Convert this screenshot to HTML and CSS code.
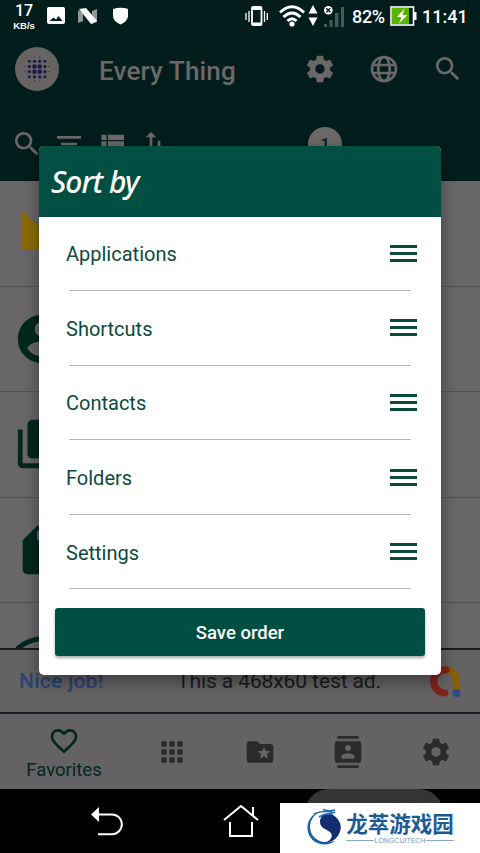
FILE: index.html
```html
<!DOCTYPE html>
<html lang="en">
<head>
<meta charset="utf-8">
<title>Every Thing</title>
<link rel="stylesheet" href="styles.css">
</head>
<body>
<svg class="defs" width="0" height="0">
  <symbol id="gear" viewBox="0 0 24 24"><path d="M19.43 12.98c.04-.32.07-.64.07-.98s-.03-.66-.07-.98l2.11-1.65c.19-.15.24-.42.12-.64l-2-3.46c-.12-.22-.39-.3-.61-.22l-2.49 1c-.52-.4-1.08-.73-1.69-.98l-.38-2.65C14.46 2.18 14.25 2 14 2h-4c-.25 0-.46.18-.49.42l-.38 2.65c-.61.25-1.17.59-1.69.98l-2.49-1c-.23-.09-.49 0-.61.22l-2 3.46c-.13.22-.07.49.12.64l2.11 1.65c-.04.32-.07.65-.07.98s.03.66.07.98l-2.11 1.65c-.19.15-.24.42-.12.64l2 3.46c.12.22.39.3.61.22l2.49-1c.52.4 1.08.73 1.69.98l.38 2.65c.03.24.24.42.49.42h4c.25 0 .46-.18.49-.42l.38-2.65c.61-.25 1.17-.59 1.69-.98l2.49 1c.23.09.49 0 .61-.22l2-3.46c.12-.22.07-.49-.12-.64l-2.11-1.65zM12 15.5c-1.93 0-3.5-1.57-3.5-3.5s1.57-3.5 3.5-3.5 3.5 1.57 3.5 3.5-1.57 3.5-3.5 3.5z"/></symbol>
  <symbol id="search" viewBox="0 0 24 24"><path d="M15.5 14h-.79l-.28-.27C15.41 12.59 16 11.11 16 9.5 16 5.91 13.09 3 9.5 3S3 5.91 3 9.5 5.91 16 9.5 16c1.61 0 3.09-.59 4.23-1.57l.27.28v.79l5 4.99L20.49 19l-4.99-5zm-6 0C7.01 14 5 11.99 5 9.5S7.01 5 9.5 5 14 7.01 14 9.5 11.99 14 9.5 14z"/></symbol>
</svg>
<div class="screen">
  <header class="top">
    <div class="status">
      <div class="speed"><b>17</b><span>KB/s</span></div>
      <svg class="s-pic" width="18" height="18" viewBox="0 0 18 18"><path fill="#fff" fill-rule="evenodd" d="M2 0h14q2 0 2 2v13q0 2-2 2H2q-2 0-2-2V2q0-2 2-2zM2.500 14h13l-4-5-2.500 3.500-2.500-2z"/></svg>
      <svg class="s-n" width="20" height="18" viewBox="0 0 20 18"><path fill="#8d9a98" d="M0 2l5 3v8l-5 2zM14 3l5-2v13l-5 2z"/><path fill="#fff" d="M1 1l7-1 11 13-6 3z"/></svg>
      <svg class="s-shield" width="16" height="18" viewBox="0 0 16 18"><path fill="#fff" d="M0 2Q8-.5 15 2v7q0 5-7.500 8.500Q0 14 0 9z"/></svg>
      <svg class="s-vib" width="24" height="22" viewBox="0 0 24 22" fill="none" stroke="#fff"><path stroke-width="1.300" d="M1 8v7M4 6v11M19.500 6v11M22.300 8v7"/><rect x="7" y="2" width="9.500" height="18" rx="1" stroke-width="1.800"/><path stroke-width="2" d="M7 4h9M8 18.500h8"/></svg>
      <svg class="s-wifi" width="26" height="22" viewBox="0 0 26 22" fill="none" stroke="#fff" stroke-width="2.800"><path d="M1 7.500Q13-4 25 7.500M4.500 12Q13 4 21.500 12M8.500 16Q13 11.500 17.500 16"/><circle cx="13" cy="19" r="2.600" fill="#fff" stroke="none"/></svg>
      <svg class="s-data" width="10" height="22" viewBox="0 0 10 22"><path fill="#fff" d="M5 0l4.500 8.500h-9zM5 21L.5 12.500h9z"/></svg>
      <svg class="s-sig" width="22" height="22" viewBox="0 0 22 22"><path fill="#43595a" d="M1 18h3v3H1zM6.500 14h3v7h-3zM12 7h3.500v14H12zM18 1h3v20h-3z"/><circle cx="5.300" cy="4.300" r="4.300" fill="#fff"/><path stroke="#021d1c" stroke-width="1.500" d="M3.300 2.300l4 4M7.300 2.300l-4 4"/></svg>
      <span class="pct">82%</span>
      <svg class="s-bat" width="27" height="20" viewBox="0 0 27 20"><rect x="1" y="1" width="22.500" height="18" fill="#021d1c" stroke="#fff" stroke-width="1.600"/><path fill="#58b400" d="M2 2h17v16H2z"/><path fill="#fff" d="M24 6h2.500v8H24zM14.500 2.500L7 11h4.500L9 17.500 17.500 9h-5z"/></svg>
      <span class="clock">11:41</span>
    </div>
    <div class="appbar">
      <svg class="logo" width="44" height="44" viewBox="0 0 44 44"><circle cx="22" cy="22" r="22" fill="#676463"/><g fill="#1d1849"><circle cx="19.500" cy="19.500" r="2.300"/><circle cx="24.700" cy="19.500" r="2.300"/><circle cx="19.500" cy="24.700" r="2.300"/><circle cx="24.700" cy="24.700" r="2.300"/><circle cx="14.300" cy="14.300" r="1.400"/><circle cx="19.500" cy="14.300" r="1.600"/><circle cx="24.700" cy="14.300" r="1.600"/><circle cx="29.900" cy="14.300" r="1.400"/><circle cx="14.300" cy="19.500" r="1.600"/><circle cx="29.900" cy="19.500" r="1.600"/><circle cx="14.300" cy="24.700" r="1.600"/><circle cx="29.900" cy="24.700" r="1.600"/><circle cx="14.300" cy="29.900" r="1.400"/><circle cx="19.500" cy="29.900" r="1.600"/><circle cx="24.700" cy="29.900" r="1.600"/><circle cx="29.900" cy="29.900" r="1.400"/><circle cx="19.500" cy="10" r=".6"/><circle cx="24.700" cy="10" r=".6"/><circle cx="10" cy="19.500" r=".6"/><circle cx="10" cy="24.700" r=".6"/><circle cx="34" cy="19.500" r=".6"/><circle cx="34" cy="24.700" r=".6"/><circle cx="19.500" cy="34" r=".6"/><circle cx="24.700" cy="34" r=".6"/></g></svg>
      <h1>Every Thing</h1>
      <nav class="actions">
        <svg width="32" height="32"><use href="#gear"/></svg>
        <svg width="32" height="32" viewBox="0 0 24 24" fill="none" stroke="#6b6867" stroke-width="2"><circle cx="12" cy="12" r="9"/><ellipse cx="12" cy="12" rx="4.300" ry="9"/><path d="M3.500 9h17M3.500 15h17"/></svg>
        <svg width="32" height="32"><use href="#search"/></svg>
      </nav>
    </div>
    <div class="tools">
      <svg class="t-search" width="32" height="32"><use href="#search"/></svg>
      <svg class="t-sort" width="32" height="32" viewBox="0 0 24 24"><path d="M10 18h4v-2h-4v2zM3 6v2h18V6H3zm3 7h12v-2H6v2z"/></svg>
      <svg class="t-list" width="32" height="32" viewBox="0 0 24 24"><path d="M4 14h4v-4H4v4zm0 5h4v-4H4v4zM4 9h4V5H4v4zm5 5h12v-4H9v4zm0 5h12v-4H9v4zM9 5v4h12V5H9z"/></svg>
      <svg class="t-swap" width="32" height="32" viewBox="0 0 24 24"><path d="M16 17.010V9.500h-2v7.510h-3L15 21l4-3.990h-3zM9 3L5 6.990h3V14h2V6.990h3L9 3z"/></svg>
      <span class="count">1</span>
    </div>
  </header>
  <main class="list">
    <div class="row"><svg width="58" height="58" viewBox="0 0 58 58"><path fill="#8a6c06" d="M9 7l19 17v21H9z"/></svg></div>
    <div class="row"><svg width="58" height="58" viewBox="0 0 24 24"><path d="M12 2C6.480 2 2 6.480 2 12s4.480 10 10 10 10-4.480 10-10S17.520 2 12 2zm0 3c1.660 0 3 1.340 3 3s-1.340 3-3 3-3-1.340-3-3 1.340-3 3-3zm0 14.200c-2.500 0-4.710-1.280-6-3.220.03-1.990 4-3.080 6-3.080 1.990 0 5.970 1.090 6 3.080-1.290 1.940-3.500 3.220-6 3.220z"/></svg></div>
    <div class="row"><svg width="58" height="58" viewBox="0 0 24 24"><path d="M4 6H2v14c0 1.100.9 2 2 2h14v-2H4V6zm16-4H8c-1.100 0-2 .9-2 2v12c0 1.100.9 2 2 2h12c1.100 0 2-.9 2-2V4c0-1.100-.9-2-2-2z"/></svg></div>
    <div class="row"><svg width="58" height="58" viewBox="0 0 24 24"><path d="M18 2h-8L4.020 8 4 20c0 1.100.9 2 2 2h12c1.100 0 2-.9 2-2V4c0-1.100-.9-2-2-2zm-6 6h-2V4h2v4z"/></svg></div>
    <div class="row last"><svg width="60" height="12" viewBox="0 0 60 12"><path fill="none" stroke="#01281d" stroke-width="5" d="M3 13Q14 3 30 2.500"/></svg></div>
  </main>
  <section class="ad">
    <span class="ad-nice">Nice job!</span>
    <span class="ad-text">This a 468x60 test ad.</span>
    <svg width="33" height="33" viewBox="0 0 33 33" fill="none" stroke-width="7.200" stroke-linecap="round"><path stroke="#866006" d="M17 5Q27.500 6 27.500 17v10"/><path stroke="#82231c" d="M17 4.800C8 4.800 4.500 11 4.800 17c.4 6 4.500 10.500 11 11"/><circle cx="27.500" cy="28" r="3.900" fill="#294b8d"/></svg>
  </section>
  <nav class="tabs">
    <div class="tab active">
      <svg width="32" height="32" viewBox="0 0 24 24"><path d="M16.500 3c-1.740 0-3.410.81-4.500 2.090C10.910 3.810 9.240 3 7.500 3 4.420 3 2 5.420 2 8.500c0 3.780 3.400 6.860 8.550 11.540L12 21.350l1.450-1.320C18.600 15.360 22 12.280 22 8.500 22 5.420 19.580 3 16.500 3zm-4.400 15.550l-.1.100-.1-.1C7.140 14.240 4 11.390 4 8.500 4 6.500 5.500 5 7.500 5c1.540 0 3.040.99 3.570 2.360h1.870C13.460 5.990 14.960 5 16.500 5c2 0 3.500 1.500 3.500 3.500 0 2.890-3.140 5.740-7.900 10.050z"/></svg>
      <span>Favorites</span>
    </div>
    <div class="tab"><svg width="32" height="32" viewBox="0 0 24 24"><path d="M4 8h4V4H4v4zm6 12h4v-4h-4v4zm-6 0h4v-4H4v4zm0-6h4v-4H4v4zm6 0h4v-4h-4v4zm6-10v4h4V4h-4zm-6 4h4V4h-4v4zm6 6h4v-4h-4v4zm0 6h4v-4h-4v4z"/></svg></div>
    <div class="tab"><svg width="32" height="32" viewBox="0 0 24 24"><path d="M20 6h-8l-2-2H4c-1.100 0-1.990.9-1.990 2L2 18c0 1.100.9 2 2 2h16c1.100 0 2-.9 2-2V8c0-1.100-.9-2-2-2zm-2.060 11L15 15.280 12.060 17l.78-3.330-2.590-2.240 3.410-.29L15 8l1.340 3.140 3.410.29-2.590 2.240.78 3.330z"/></svg></div>
    <div class="tab"><svg width="32" height="32" viewBox="0 0 24 24"><path d="M20 0H4v2h16V0zM4 24h16v-2H4v2zM20 4H4c-1.100 0-2 .9-2 2v12c0 1.100.9 2 2 2h16c1.100 0 2-.9 2-2V6c0-1.100-.9-2-2-2zm-8 2.750c1.240 0 2.250 1.010 2.250 2.250s-1.010 2.250-2.250 2.250S9.750 10.240 9.750 9 10.760 6.750 12 6.750zM17 17H7v-1.500c0-1.670 3.330-2.500 5-2.500s5 .83 5 2.500V17z"/></svg></div>
    <div class="tab"><svg width="32" height="32"><use href="#gear"/></svg></div>
  </nav>
  <footer class="sysbar">
    <svg class="back" width="34" height="32" viewBox="0 0 34 32"><path fill="none" stroke="#fff" stroke-width="2" d="M7 8.500h14a9.800 9.800 0 0 1 0 19.700H7"/><path fill="#fff" d="M0 8.500L8 1v15z"/></svg>
    <svg class="home" width="36" height="34" viewBox="0 0 36 34" fill="none" stroke="#fff" stroke-width="2"><path d="M1 16L18 2l17 14M30 11V3M7 18v14h22V18"/></svg>
    <i class="pill"></i>
  </footer>
</div>
<section class="dialog">
  <h2>Sort by</h2>
  <ul>
    <li><span>Applications</span><i></i></li>
    <li><span>Shortcuts</span><i></i></li>
    <li><span>Contacts</span><i></i></li>
    <li><span>Folders</span><i></i></li>
    <li><span>Settings</span><i></i></li>
  </ul>
  <button>Save order</button>
</section>
<aside class="mark">
  <svg width="38" height="38" viewBox="0 0 38 38"><path fill="#1762a2" d="M13 4C5 7 1 13 1.500 21c.6 9 8 15.500 17 15.500 4 0 8-1.500 11-4-9 4-20 1-24-7C2 17 5 9 13 4z"/><path fill="#142d72" d="M14 14c0-7 7-10 13-7 7 4 10 12 6 19-3 6-9 9-15 9 7-2 10-7 6-11-4-3-10-4-10-10z"/><path fill="none" stroke="#1c6cab" stroke-width="1.600" d="M8 6q6-3 13-2.500l8 1M17 1.500l6 1.500 6-1M13 9q6-4 14-3"/></svg>
  <div><strong>龙萃游戏园</strong><small>LONGCUITECH</small></div>
</aside>
</body>
</html>
```
FILE: styles.css
```css
* { box-sizing: border-box; }
body { margin: 0; width: 480px; height: 853px; overflow: hidden; position: relative; font-family: Roboto, "Liberation Sans", sans-serif; background: #000; }
svg { display: block; flex: none; }
.defs { position: absolute; }
.screen { display: flex; flex-direction: column; height: 853px; }

.top { height: 181px; background: #021d1c; fill: #6b6867; color: #6b6867; }
.status { height: 32px; display: flex; align-items: flex-start; color: #fff; padding-left: 12px; }
.speed { width: 24px; padding-top: 2px; display: flex; flex-direction: column; align-items: center; }
.speed b { font-size: 16px; font-weight: 500; line-height: 18px; }
.speed span { font: bold 9.500px/11px "Liberation Sans", sans-serif; }
.s-pic { margin: 7px 0 0 11px; }
.s-n { margin: 8px 0 0 13px; }
.s-shield { margin: 7px 0 0 15px; }
.s-vib { margin: 5px 0 0 116px; }
.s-wifi { margin: 5px 0 0 10px; }
.s-data { margin: 5px 0 0 3px; }
.s-sig { margin: 6px 0 0 5px; }
.pct { width: 38px; margin-left: 7px; font-size: 18px; font-weight: 500; line-height: 34px; letter-spacing: -.3px; }
.s-bat { margin: 6px 0 0 0; }
.clock { margin-left: 5px; font-size: 18px; font-weight: 500; line-height: 34px; }
.appbar { height: 74px; display: flex; align-items: center; padding: 0 16px 0 15px; }
.appbar h1 { margin: 3px 0 0 40px; font-size: 26px; font-weight: 500; line-height: 32px; letter-spacing: .15px; white-space: nowrap; }
.actions { display: flex; gap: 32px; margin-left: auto; }
.tools { display: flex; align-items: center; margin-top: 22px; height: 32px; padding-left: 11px; }
.t-sort { margin-left: 10px; }
.t-list { margin-left: 11px; }
.t-swap { margin-left: 11px; }
.count { width: 34px; height: 34px; margin-left: 137px; border-radius: 50%; background: #6b6867; color: #021d1c; text-align: center; font-size: 17px; font-weight: 500; line-height: 34px; }

.list { height: 467px; background: #69666a; }
.row { height: 105.500px; padding-left: 13px; display: flex; align-items: center; border-bottom: 1.500px solid #535154; fill: #01281d; }
.row.last { height: 45px; padding-left: 14px; align-items: flex-end; border: 0; }

.ad { height: 66px; border-top: 2px solid #1b191b; border-bottom: 2px solid #1b191b; background: #656264; display: flex; align-items: center; padding: 0 18px 0 19px; font-size: 21px; line-height: 28px; white-space: nowrap; }
.ad-nice { width: 158px; color: #2a4375; font-weight: 500; letter-spacing: .25px; }
.ad-text { color: #1c1b1d; letter-spacing: -.1px; }
.ad svg { margin-left: auto; }

.tabs { height: 75px; background: #656265; display: grid; grid-template-columns: 128px repeat(4, 88px); fill: #2c292c; }
.tab { display: flex; flex-direction: column; align-items: center; justify-content: center; }
.tab.active { justify-content: flex-start; padding-top: 11px; color: #02271e; fill: #02271e; font-size: 18.500px; line-height: 26px; }
.sysbar { height: 64px; display: flex; background: #000; }
.back { margin: 17px 0 0 91px; }
.home { margin: 15px 0 0 98px; }
.pill { width: 138px; height: 30px; margin-left: 46px; border-radius: 24px 24px 0 0; background: #373437; }

.dialog { position: absolute; left: 39px; top: 146px; width: 402px; height: 529px; background: #fff; border-radius: 5px; overflow: hidden; box-shadow: 0 6px 16px rgba(0,0,0,.42); }
.dialog h2 { margin: 0; height: 70.500px; padding-left: 12px; background: #004f42; color: #fff; font: italic 500 30px/71px "Noto Sans", sans-serif; letter-spacing: -1px; }
.dialog ul { list-style: none; margin: 0; padding: 0 30px; }
.dialog li { height: 74.600px; display: flex; align-items: center; justify-content: space-between; border-bottom: 1px solid #b8b8b8; font-size: 20px; color: #0b4b3d; }
.dialog li span { margin-left: -3px; padding-top: 2px; }
.dialog li i { width: 27px; height: 17px; margin-right: -6px; border-top: 3px solid #0b4b3d; border-bottom: 3px solid #0b4b3d; background: linear-gradient(#0b4b3d, #0b4b3d) center / 100% 3px no-repeat; }
.dialog button { display: block; width: 370px; height: 48px; margin: 19px 0 0 16px; padding: 2px 0 0; border: 0; border-radius: 3px; background: #004f42; color: #fff; font: 500 18.500px/46px Roboto, sans-serif; box-shadow: 0 2px 3px rgba(0,0,0,.35); }

.mark { position: absolute; left: 280px; top: 803px; width: 200px; height: 50px; padding: 0 0 2px 26px; background: #fff; display: flex; align-items: center; gap: 2px; color: #1b5a97; }
.mark div { width: 108px; text-align: center; }
.mark strong { display: block; white-space: nowrap; font: bold 21.500px/27px "Noto Sans CJK SC", sans-serif; }
.mark small { display: flex; align-items: center; gap: 1px; font: 7px/9px "Liberation Sans", sans-serif; color: #7b9abb; }
.mark small::before, .mark small::after { content: ""; flex: 1; height: 1px; background: #8aaccc; }
```
